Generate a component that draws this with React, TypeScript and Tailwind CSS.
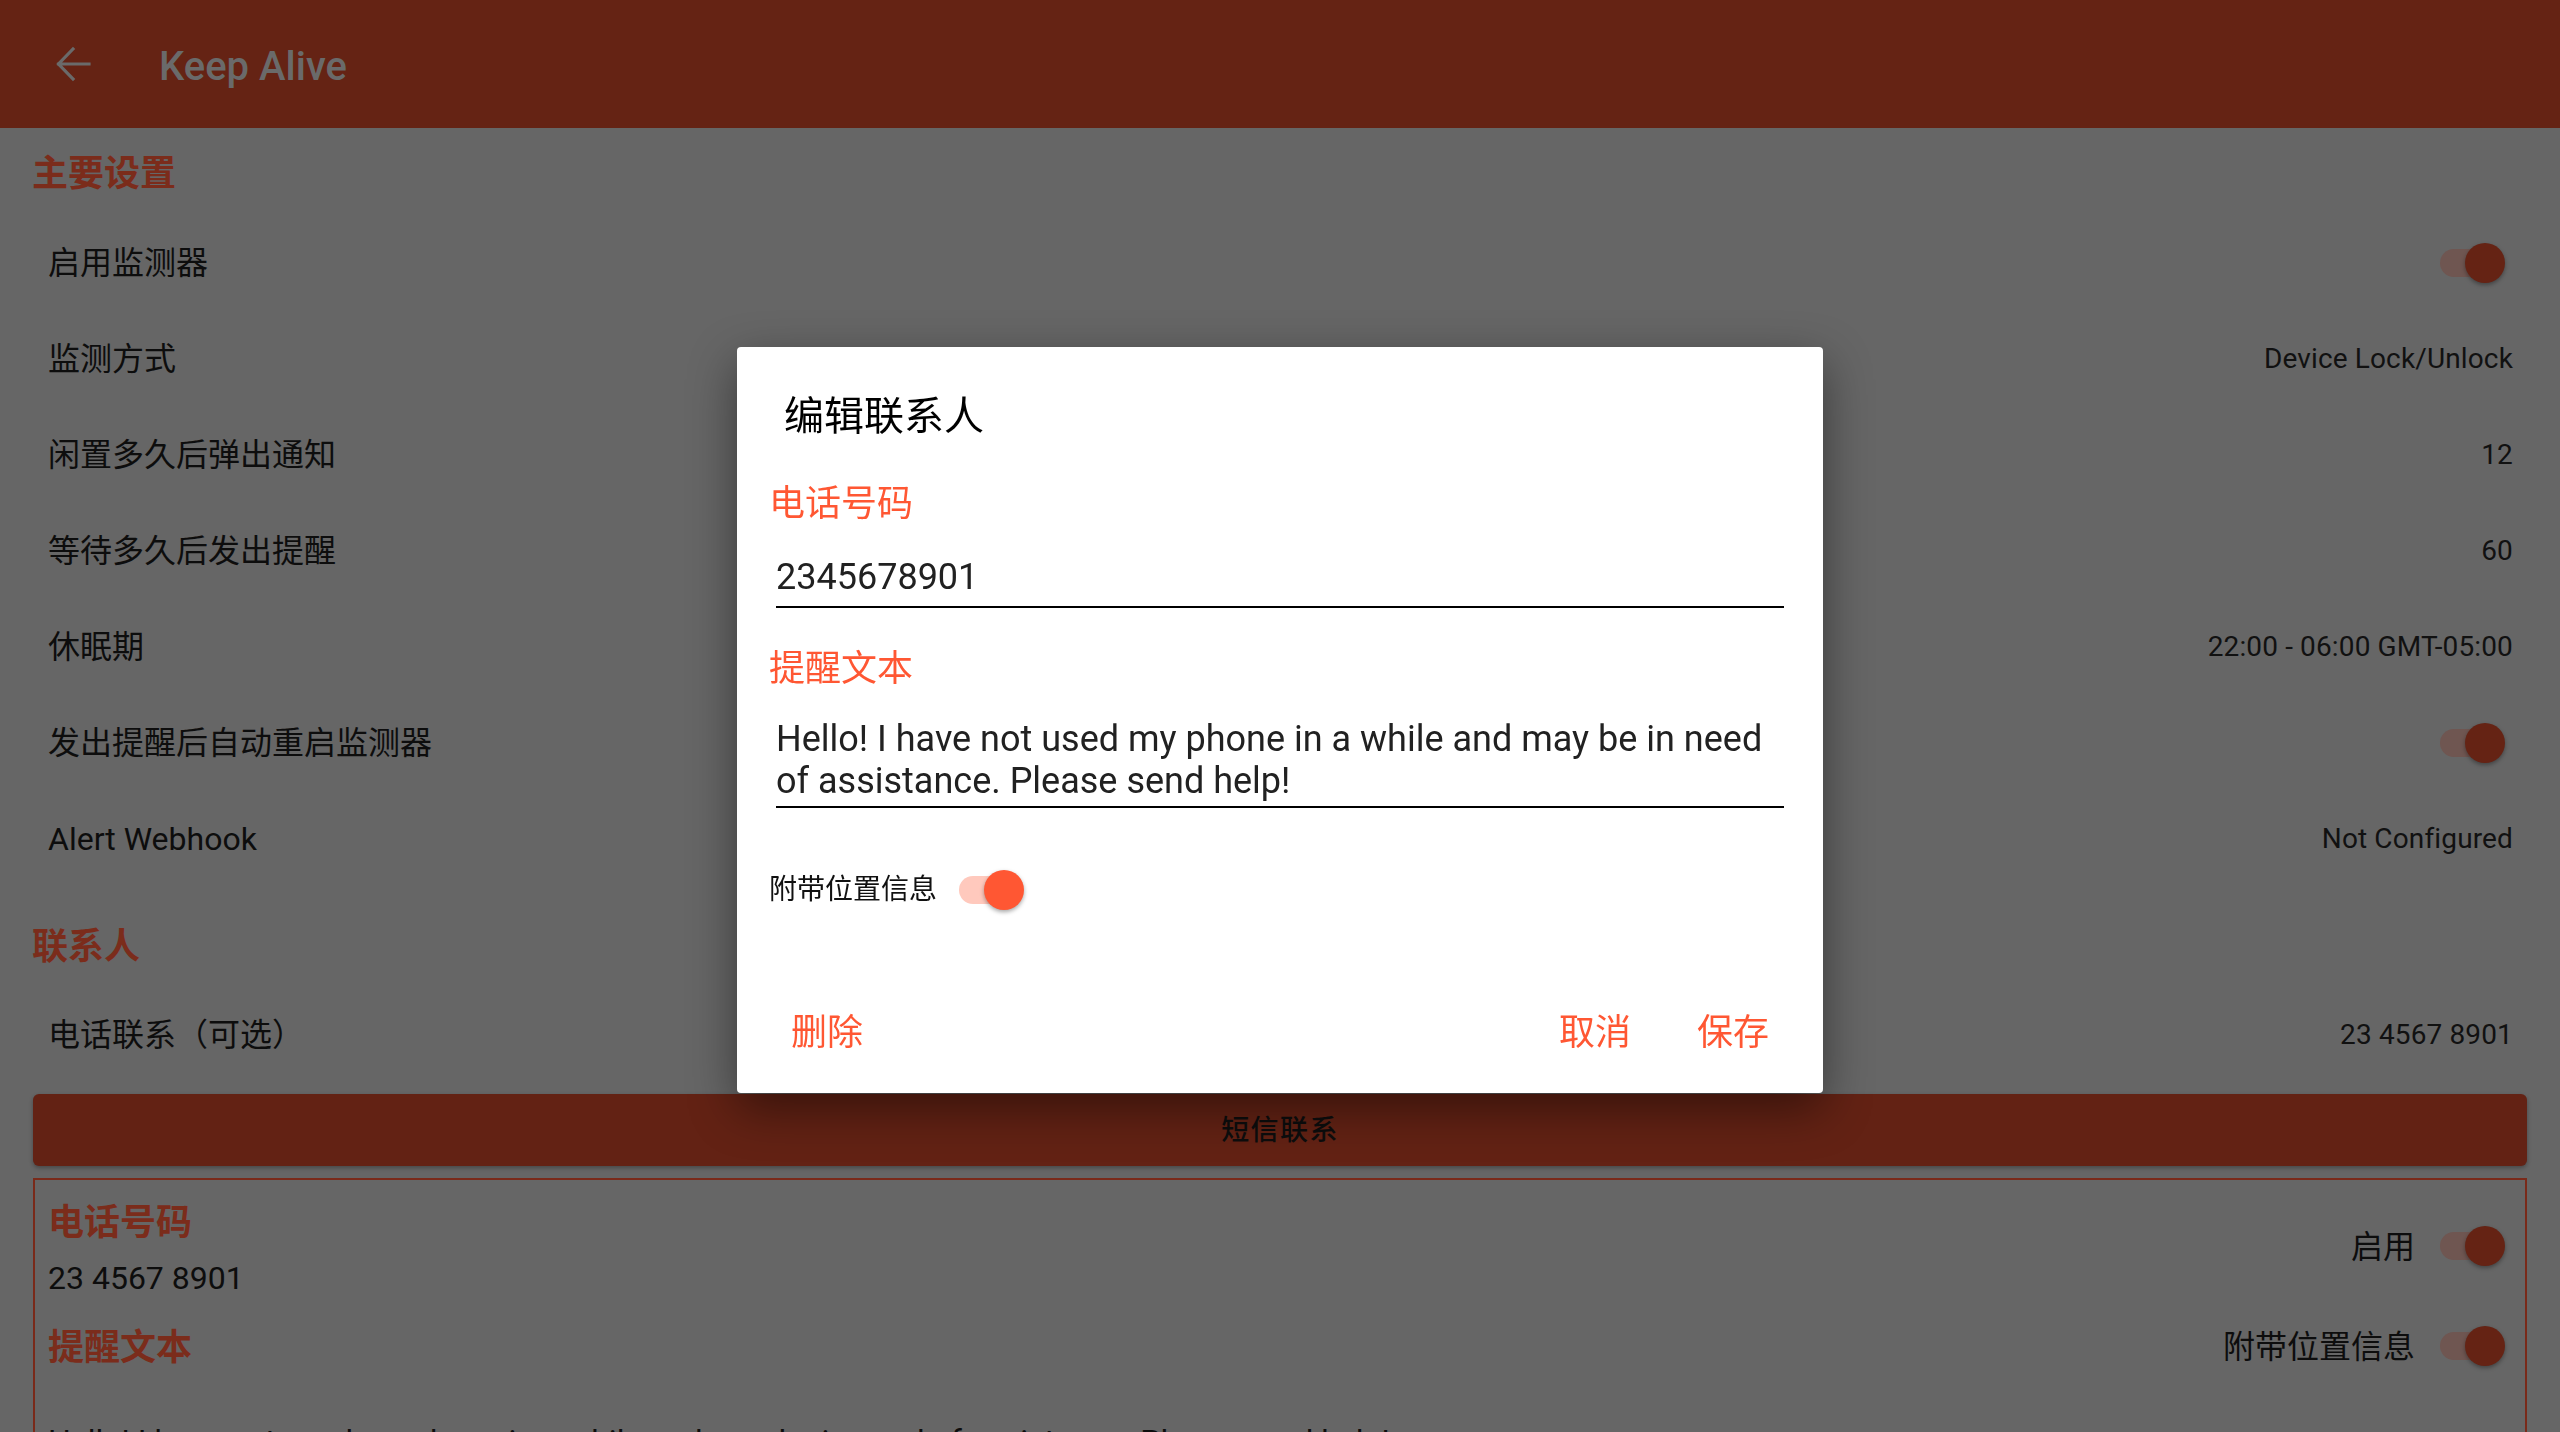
import React from 'react';

const FONT = "font-['Roboto','Noto_Sans_CJK_SC',sans-serif]";

function Toggle({ dim }: { dim?: boolean }) {
  return (
    <div className="relative h-[40px] w-[65px] shrink-0">
      <div
        className={`absolute left-0 top-[6px] h-[28px] w-[56px] rounded-full ${dim ? 'bg-[#6f5651]' : 'bg-[#ffc9bd]'}`}
      />
      <div
        className={`absolute right-0 top-0 h-[40px] w-[40px] rounded-full shadow-[0_2px_4px_rgba(0,0,0,0.35)] ${dim ? 'bg-[#652314]' : 'bg-[#ff5733]'}`}
      />
    </div>
  );
}

type Row = { label: string; value?: string; toggle?: boolean };

const mainRows: Row[] = [
  { label: '启用监测器', toggle: true },
  { label: '监测方式', value: 'Device Lock/Unlock' },
  { label: '闲置多久后弹出通知', value: '12' },
  { label: '等待多久后发出提醒', value: '60' },
  { label: '休眠期', value: '22:00 - 06:00 GMT-05:00' },
  { label: '发出提醒后自动重启监测器', toggle: true },
  { label: 'Alert Webhook', value: 'Not Configured' },
];

function SettingRow({ row }: { row: Row }) {
  return (
    <div className="flex h-[96px] items-center justify-between pl-[48px] pr-[47px]">
      <span className="text-[32px] leading-[40px] text-[#0d0d0d]">{row.label}</span>
      {row.toggle ? (
        <div className="mr-[8px]">
          <Toggle dim />
        </div>
      ) : (
        <span className="text-[28px] leading-[36px] tracking-[0.005em] text-[#111111]">{row.value}</span>
      )}
    </div>
  );
}

export default function App() {
  return (
    <div className={`relative h-[1432px] w-full overflow-hidden bg-[#666666] ${FONT}`}>
      {/* Toolbar */}
      <header className="flex h-[128px] items-center bg-[#652314]">
        <svg className="ml-[49px] h-[48px] w-[48px]" viewBox="0 0 48 48" fill="none">
          <path
            d="M40 24H9.5M24 9L9.5 24L24 39"
            stroke="#6a6a6a"
            strokeWidth="3.2"
            strokeLinecap="square"
          />
        </svg>
        <h1 className="ml-[62px] mt-[5px] text-[40px] font-medium leading-[48px] text-[#6a6a6a]">Keep Alive</h1>
      </header>

      {/* Main settings */}
      <div className="pb-[19px] pl-[32px] pt-[24px] text-[36px] font-bold leading-[44px] text-[#7b2c1b]">
        主要设置
      </div>
      {mainRows.map((r) => (
        <SettingRow key={r.label} row={r} />
      ))}

      {/* Contacts */}
      <div className="pb-[18px] pl-[32px] pt-[38px] text-[36px] font-bold leading-[44px] text-[#7b2c1b]">
        联系人
      </div>
      <SettingRow row={{ label: '电话联系（可选）', value: '23 4567 8901' }} />

      <div className="mx-[33px] mt-[11px] flex h-[72px] items-center justify-center rounded-[6px] bg-[#632214] pt-[2px] text-[28px] font-medium tracking-[0.05em] text-[#0d0d0d] shadow-[0_2px_4px_rgba(0,0,0,0.3)]">
        短信联系
      </div>

      <div className="mx-[33px] mt-[12px] flex border-2 border-[#7a2a1a]">
        <div className="flex-1 pl-[13px] pt-[21px]">
          <div className="text-[36px] font-bold leading-[44px] text-[#7b2c1b]">电话号码</div>
          <div className="mt-[14px] text-[32px] leading-[38px] text-[#0d0d0d]">23 4567 8901</div>
          <div className="mt-[29px] text-[36px] font-bold leading-[44px] text-[#7b2c1b]">提醒文本</div>
          <div className="mt-[52px] text-[32px] leading-[38px] text-[#0d0d0d]">
            Hello! I have not used my phone in a while and may be in need of assistance. Please send help!
          </div>
        </div>
        <div className="pr-[20px] pt-[46px]">
          <div className="flex h-[40px] items-center justify-end gap-[25px]">
            <span className="mt-[2px] text-[32px] leading-[40px] text-[#0d0d0d]">启用</span>
            <Toggle dim />
          </div>
          <div className="mt-[60px] flex h-[40px] items-center justify-end gap-[25px]">
            <span className="mt-[2px] text-[32px] leading-[40px] text-[#0d0d0d]">附带位置信息</span>
            <Toggle dim />
          </div>
        </div>
      </div>

      {/* Dialog */}
      <div className="fixed inset-0 flex items-start justify-center pt-[347px]">
        <div className="w-[1086px] rounded-[4px] bg-white pb-[36px] pt-[46px] shadow-[0_16px_48px_rgba(0,0,0,0.45)]">
          <div className="pl-[47px] text-[40px] leading-[48px] text-black">编辑联系人</div>

          <div className="mt-[39px] pl-[32px] text-[36px] leading-[48px] text-[#ff5733]">电话号码</div>
          <div className="mx-[39px] mt-[28px] border-b-2 border-black pb-[8px] text-[36px] leading-[42px] text-[#212121]">
            2345678901
          </div>

          <div className="mt-[37px] pl-[32px] text-[36px] leading-[48px] text-[#ff5733]">提醒文本</div>
          <div className="mx-[39px] mt-[25px] border-b-2 border-black pb-[4px] text-[36px] leading-[42px] text-[#212121]">
            Hello! I have not used my phone in a while and may be in need of assistance. Please send help!
          </div>

          <div className="mt-[58px] flex h-[48px] items-center gap-[22px] pl-[32px]">
            <span className="text-[28px] leading-[36px] text-[#111111]">附带位置信息</span>
            <Toggle />
          </div>

          <div className="mt-[95px] flex h-[48px] items-center px-[54px] text-[36px] leading-[48px] text-[#ff5733]">
            <span>删除</span>
            <span className="ml-auto">取消</span>
            <span className="ml-[66px]">保存</span>
          </div>
        </div>
      </div>
    </div>
  );
}
